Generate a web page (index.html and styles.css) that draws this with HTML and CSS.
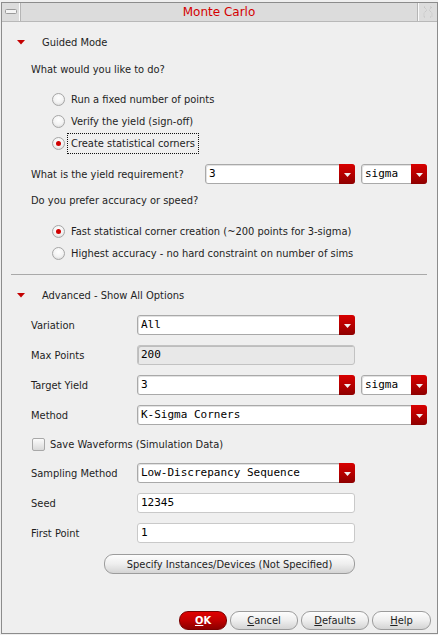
FILE: index.html
```html
<!DOCTYPE html>
<html>
<head>
<meta charset="utf-8">
<title>Monte Carlo</title>
<link rel="stylesheet" href="styles.css">
</head>
<body>
<div class="window">
  <div class="titlebar">
    <div class="tb-btn tb-left">
      <svg width="12" height="6" viewBox="0 0 12 6"><rect x="0.5" y="0.5" width="11" height="4" rx="1" fill="#f4f4f4" stroke="#9a9a9a"/></svg>
    </div>
    <div class="title">Monte Carlo</div>
    <div class="tb-btn tb-right">
      <svg width="12" height="12" viewBox="0 0 12 12"><path d="M2 1 L5 4 L2 7 L2 11 M10 1 L7 4 L10 7 L10 11 M2 1 H4 M8 1 H10 M2 11 H4 M8 11 H10" fill="none" stroke="#c2c2c2" stroke-dasharray="1 1"/></svg>
    </div>
  </div>

  <div class="content">
    <div class="head"><svg class="tri" width="8" height="5" viewBox="0 0 8 5"><polygon points="0,0 8,0 4,4.5" fill="#c40000"/></svg><span>Guided Mode</span></div>
    <div class="question">What would you like to do?</div>
    <div class="radios">
      <div class="radio"><span class="rb"></span><span class="rlabel">Run a fixed number of points</span></div>
      <div class="radio"><span class="rb"></span><span class="rlabel">Verify the yield (sign-off)</span></div>
      <div class="radio"><span class="rb on"></span><span class="rlabel focus">Create statistical corners</span></div>
    </div>
    <div class="yield-row">
      <span class="ylabel">What is the yield requirement?</span>
      <div class="combo c-yield"><span class="val">3</span><span class="drop"><svg width="7" height="4" viewBox="0 0 7 4"><polygon points="0,0 7,0 3.5,4" fill="#f2f2f2"/></svg></span></div>
      <div class="combo c-sigma"><span class="val">sigma</span><span class="drop"><svg width="7" height="4" viewBox="0 0 7 4"><polygon points="0,0 7,0 3.5,4" fill="#f2f2f2"/></svg></span></div>
    </div>
    <div class="question q2">Do you prefer accuracy or speed?</div>
    <div class="radios r2">
      <div class="radio"><span class="rb on"></span><span class="rlabel">Fast statistical corner creation (~200 points for 3-sigma)</span></div>
      <div class="radio"><span class="rb"></span><span class="rlabel">Highest accuracy - no hard constraint on number of sims</span></div>
    </div>
    <div class="sep"></div>
    <div class="head head2"><svg class="tri" width="8" height="5" viewBox="0 0 8 5"><polygon points="0,0 8,0 4,4.5" fill="#c40000"/></svg><span>Advanced - Show All Options</span></div>

    <div class="form">
      <div class="frow">
        <span class="flabel">Variation</span>
        <div class="combo c-wide"><span class="val">All</span><span class="drop"><svg width="7" height="4" viewBox="0 0 7 4"><polygon points="0,0 7,0 3.5,4" fill="#f2f2f2"/></svg></span></div>
      </div>
      <div class="frow">
        <span class="flabel">Max Points</span>
        <div class="field disabled"><span class="val">200</span></div>
      </div>
      <div class="frow">
        <span class="flabel">Target Yield</span>
        <div class="combo c-wide"><span class="val">3</span><span class="drop"><svg width="7" height="4" viewBox="0 0 7 4"><polygon points="0,0 7,0 3.5,4" fill="#f2f2f2"/></svg></span></div>
        <div class="combo c-sigma"><span class="val">sigma</span><span class="drop"><svg width="7" height="4" viewBox="0 0 7 4"><polygon points="0,0 7,0 3.5,4" fill="#f2f2f2"/></svg></span></div>
      </div>
      <div class="frow">
        <span class="flabel">Method</span>
        <div class="combo c-full"><span class="val">K-Sigma Corners</span><span class="drop"><svg width="7" height="4" viewBox="0 0 7 4"><polygon points="0,0 7,0 3.5,4" fill="#f2f2f2"/></svg></span></div>
      </div>
      <div class="frow frow-check">
        <span class="cb"></span><span class="cblabel">Save Waveforms (Simulation Data)</span>
      </div>
      <div class="frow">
        <span class="flabel">Sampling Method</span>
        <div class="combo c-wide"><span class="val">Low-Discrepancy Sequence</span><span class="drop"><svg width="7" height="4" viewBox="0 0 7 4"><polygon points="0,0 7,0 3.5,4" fill="#f2f2f2"/></svg></span></div>
      </div>
      <div class="frow">
        <span class="flabel">Seed</span>
        <div class="field"><span class="val">12345</span></div>
      </div>
      <div class="frow">
        <span class="flabel">First Point</span>
        <div class="field"><span class="val">1</span></div>
      </div>
    </div>

    <div class="specify-row">
      <div class="btn specify">Specify Instances/Devices (Not Specified)</div>
    </div>

    <div class="footer">
      <div class="btn ok"><u>O</u>K</div>
      <div class="btn b-cancel"><u>C</u>ancel</div>
      <div class="btn b-defaults"><u>D</u>efaults</div>
      <div class="btn b-help"><u>H</u>elp</div>
    </div>
  </div>
</div>
</body>
</html>
```

FILE: styles.css
```css
html, body {
  margin: 0;
  padding: 0;
  background: #efefef;
}
body {
  font-family: "DejaVu Sans Condensed", "DejaVu Sans", sans-serif;
  font-size: 11px;
  color: #1e1e1e;
}
.window {
  margin: 2px 0 0 1px;
  width: 437px;
  height: 632px;
  box-sizing: border-box;
  border: 1px solid #8c8c8c;
  background: #efefef;
  display: flex;
  flex-direction: column;
}
.titlebar {
  height: 18px;
  background: #dcdcdc;
  border-bottom: 1px solid #b8b8b8;
  display: flex;
  align-items: stretch;
}
.tb-btn {
  width: 16px;
  display: flex;
  align-items: center;
  justify-content: center;
}
.tb-left {
  border-right: 1px solid #fafafa;
  box-shadow: 1px 0 0 #b5b5b5;
  margin-left: 1px;
}
.tb-right {
  width: 18px;
  border-left: 1px solid #fafafa;
  box-shadow: -1px 0 0 #b5b5b5;
}
.title {
  flex: 1;
  text-align: center;
  color: #d40000;
  font-family: "DejaVu Sans", sans-serif;
  font-size: 12px;
  line-height: 18px;
}
.content {
  flex: 1;
  display: flex;
  flex-direction: column;
}
.head {
  margin-top: 10px;
  height: 20px;
  display: flex;
  align-items: center;
  padding-left: 15px;
}
.head .tri {
  margin-right: 17px;
  margin-top: 1px;
}
.head2 {
  margin-top: 10px;
}
.question {
  margin-top: 8px;
  height: 20px;
  line-height: 20px;
  padding-left: 29px;
}
.q2 {
  margin-top: 6px;
}
.radios {
  margin-top: 8px;
  padding-left: 50px;
}
.r2 {
  margin-top: 9px;
}
.radio {
  height: 22px;
  display: flex;
  align-items: center;
}
.rb {
  width: 11px;
  height: 11px;
  border-radius: 50%;
  border: 1px solid #a6a6a6;
  background: radial-gradient(circle at 50% 35%, #ffffff 0%, #f2f2f2 55%, #cfcfcf 100%);
  position: relative;
  flex: none;
}
.rb.on::after {
  content: "";
  position: absolute;
  left: 3px;
  top: 3px;
  width: 5px;
  height: 5px;
  border-radius: 50%;
  background: #d00000;
}
.rlabel {
  margin-left: 2px;
  padding: 2px 3px;
  border: 1px dotted transparent;
}
.rlabel.focus {
  border-color: #111;
  padding: 3px 3px 3px 3px;
}
.yield-row {
  margin-top: 9px;
  height: 22px;
  display: flex;
  align-items: center;
  padding-left: 29px;
}
.ylabel {
  width: 174px;
  flex: none;
}
.combo {
  height: 20px;
  box-sizing: border-box;
  border: 1px solid #a9a9a9;
  border-radius: 3px;
  background: #ffffff;
  display: flex;
  align-items: stretch;
  flex: none;
  box-shadow: inset 1px 1px 0 #e2e2e2;
}
.combo .val, .field .val {
  flex: 1;
  font-family: "DejaVu Sans Mono", monospace;
  font-size: 11px;
  color: #000;
  padding-left: 3px;
  line-height: 18px;
  white-space: nowrap;
  overflow: hidden;
}
.combo .drop {
  width: 16px;
  margin: -1px -1px -1px 0;
  border-radius: 0 3px 3px 0;
  background: linear-gradient(#d80000, #b30000 55%, #8e0000);
  display: flex;
  align-items: center;
  justify-content: center;
}
.combo .drop svg {
  margin-top: 1px;
}
.c-yield {
  width: 150px;
}
.c-sigma {
  width: 66px;
  margin-left: 6px;
}
.c-wide {
  width: 218px;
}
.c-full {
  width: 290px;
}
.sep {
  margin: 10px 10px 0 9px;
  height: 1px;
  background: #a9a9a9;
}
.form {
  margin-top: 5px;
  padding-left: 29px;
}
.frow {
  height: 30px;
  display: flex;
  align-items: center;
}
.flabel {
  width: 106px;
  flex: none;
}
.field {
  width: 218px;
  height: 20px;
  box-sizing: border-box;
  border: 1px solid #c9c9c9;
  border-radius: 3px;
  background: #fff;
  display: flex;
}
.field.disabled {
  background: #e8e8e8;
  border-color: #c2c2c2;
  box-shadow: inset 1px 1px 0 #bdbdbd;
}
.frow-check {
  height: 28px;
  padding-left: 1px;
}
.cb {
  width: 11px;
  height: 11px;
  border: 1px solid #a8a8a8;
  border-radius: 2px;
  background: linear-gradient(#fbfbfb, #d9d9d9);
  flex: none;
}
.cblabel {
  margin-left: 5px;
}
.btn {
  box-sizing: border-box;
  height: 20px;
  border: 1px solid #9c9c9c;
  border-radius: 9px;
  background: linear-gradient(#fdfdfd, #eeeeee 50%, #d4d4d4);
  display: flex;
  align-items: center;
  justify-content: center;
  color: #1e1e1e;
}
.specify-row {
  margin-top: 6px;
  padding-left: 102px;
}
.specify {
  width: 251px;
}
.footer {
  margin-top: auto;
  margin-bottom: 3px;
  display: flex;
  justify-content: flex-end;
  padding-right: 6px;
  gap: 3px;
}
.footer .btn {
  height: 19px;
}
.btn u {
  text-decoration: underline;
}
.ok {
  width: 48px;
  background: linear-gradient(#e00000, #c00000 50%, #8c0000);
  border-color: #7a0000;
  color: #fff;
  font-weight: bold;
}
.b-cancel {
  width: 68px;
}
.b-defaults {
  width: 68px;
}
.b-help {
  width: 59px;
}
```
